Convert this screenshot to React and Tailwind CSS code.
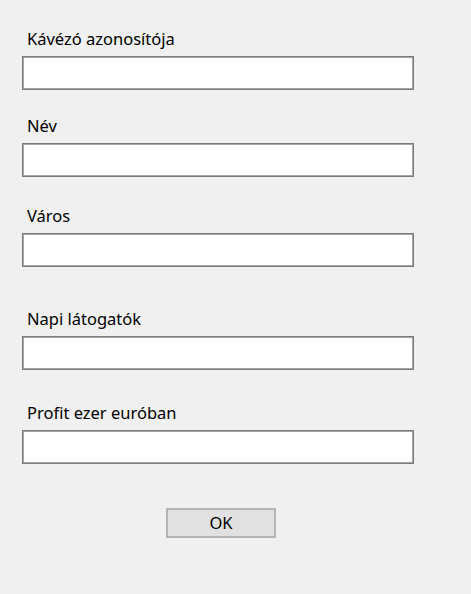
const fields = [
  { label: 'Kávézó azonosítója', mt: 'mt-[29px]' },
  { label: 'Név', mt: 'mt-[26px]' },
  { label: 'Város', mt: 'mt-[29px]' },
  { label: 'Napi látogatók', mt: 'mt-[42px]' },
  { label: 'Profit ezer euróban', mt: 'mt-[33px]' },
];

export default function App() {
  return (
    <div className="w-[471px] h-[594px] bg-[#f0f0f0] pl-[22px] text-[#000] font-['Noto_Sans',sans-serif] text-[16.5px]">
      <div className="flex flex-col">
        {fields.map(f => (
          <div key={f.label} className={f.mt}>
            <div className="leading-[20px] pl-[5px]">{f.label}</div>
            <input
              type="text"
              className="mt-[7px] block w-[392px] h-[34px] bg-white border border-[#7a7a7a] shadow-[inset_0_0_0_1px_#a5a5a5] outline-none"
            />
          </div>
        ))}
        <button className="mt-[44px] ml-[144px] w-[110px] h-[30px] bg-[#e1e1e1] border-2 border-[#b4b4b4] text-[16.5px] leading-none">
          OK
        </button>
      </div>
    </div>
  );
}
